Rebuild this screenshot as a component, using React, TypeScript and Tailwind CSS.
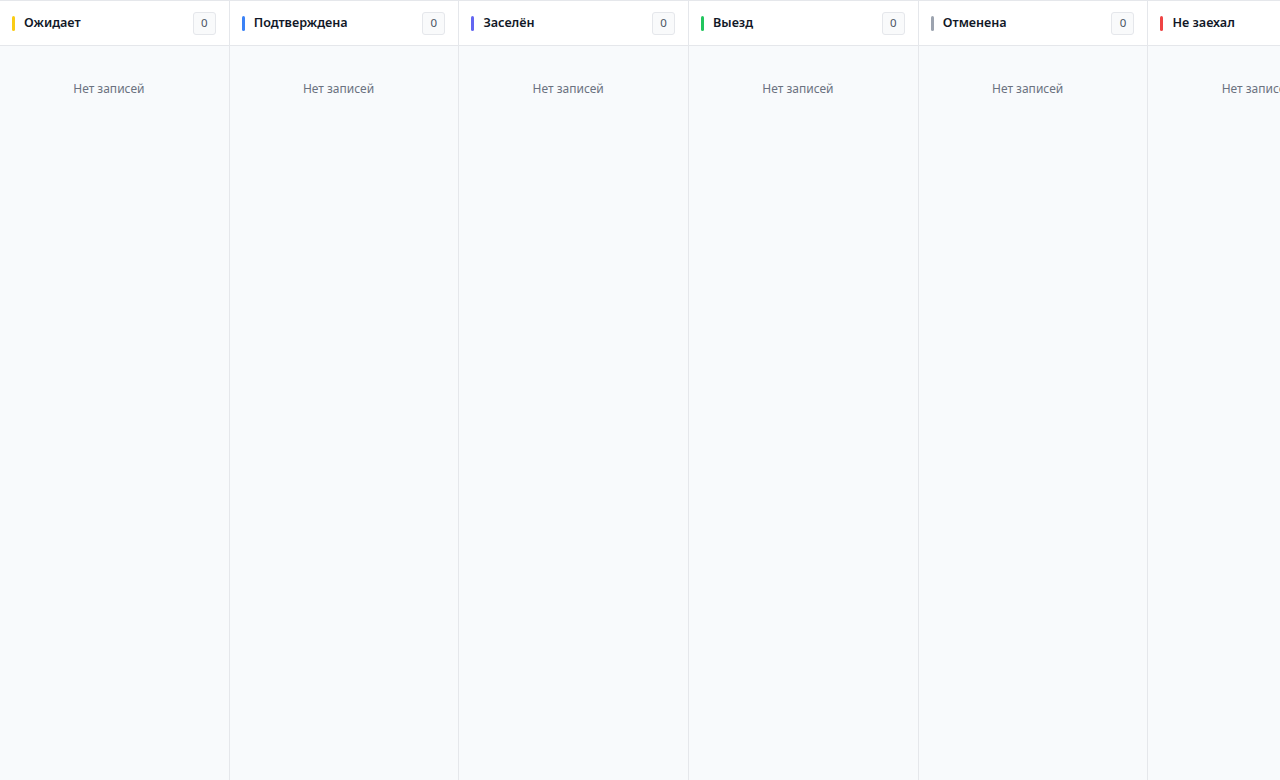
import React from "react";

const columns = [
  { title: "Ожидает", color: "bg-[#facc15]" },
  { title: "Подтверждена", color: "bg-[#3b82f6]" },
  { title: "Заселён", color: "bg-[#6366f1]" },
  { title: "Выезд", color: "bg-[#22c55e]" },
  { title: "Отменена", color: "bg-[#9ca3af]" },
  { title: "Не заехал", color: "bg-[#ef4444]" },
];

export default function App() {
  return (
    <div
      className="w-[1280px] h-[780px] overflow-hidden flex bg-[#f8fafc]"
      style={{ fontFamily: "'Noto Sans', Inter, sans-serif" }}
    >
      {columns.map((c) => (
        <div key={c.title} className="w-[229.7px] shrink-0 flex flex-col border-r border-[#e5e7eb] h-full">
          <div className="h-[46px] shrink-0 bg-white border-t border-b border-[#e5e7eb] flex items-center pl-3 pr-[13px]">
            <span className={`w-[3px] h-[15px] rounded-sm ${c.color}`} />
            <span className="ml-[9px] text-[12.6px] font-semibold text-[#111827] flex-1 whitespace-nowrap">{c.title}</span>
            <span className="w-[23px] h-[23px] shrink-0 flex items-center justify-center border border-[#e5e7eb] bg-[#f9fafb] rounded-[3px] text-[11.5px] text-[#4b5563]">
              0
            </span>
          </div>
          <div className="flex-1 pt-[34px] pr-[11px] text-center text-[12px] text-[#6b7280] whitespace-nowrap">
            Нет записей
          </div>
        </div>
      ))}
    </div>
  );
}
